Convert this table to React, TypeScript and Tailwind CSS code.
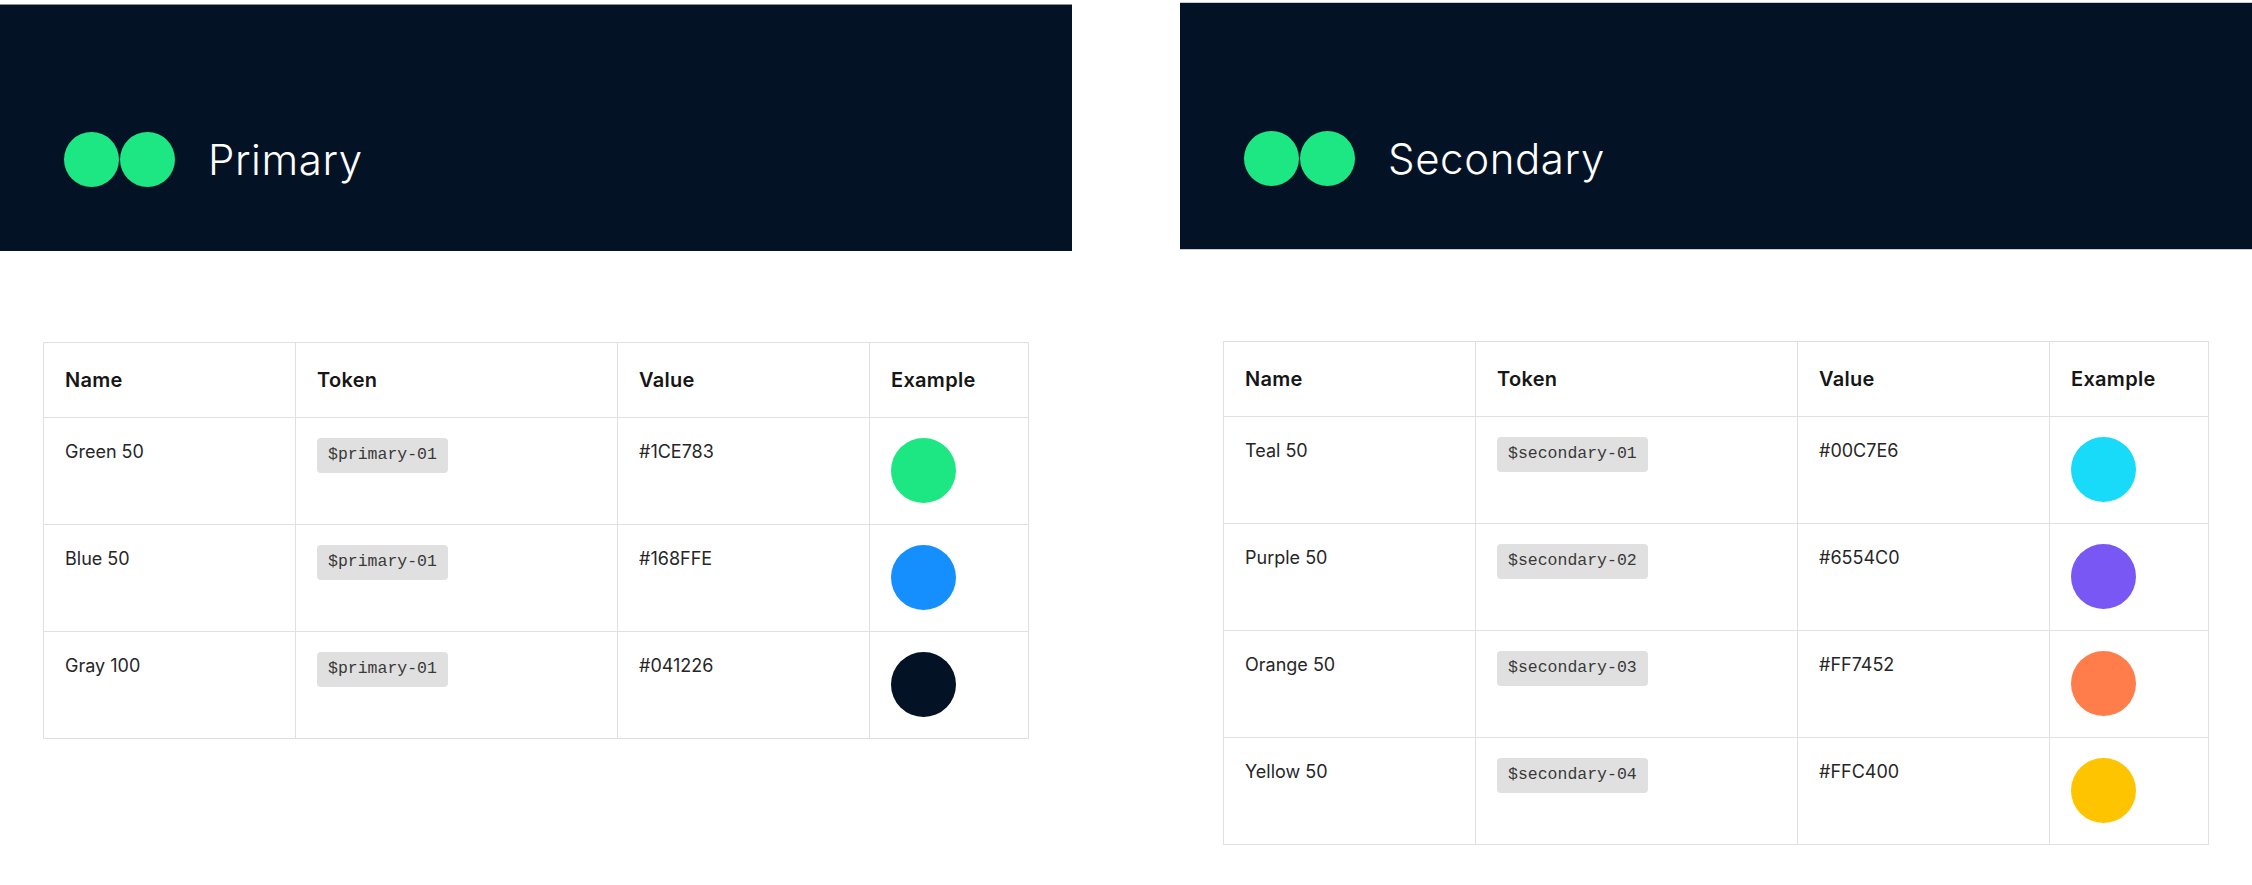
import React from "react";

type Row = { name: string; token: string; value: string; color: string };

const primary: Row[] = [
  { name: "Green 50", token: "$primary-01", value: "#1CE783", color: "#1CE783" },
  { name: "Blue 50", token: "$primary-01", value: "#168FFE", color: "#168FFE" },
  { name: "Gray 100", token: "$primary-01", value: "#041226", color: "#041226" },
];

const secondary: Row[] = [
  { name: "Teal 50", token: "$secondary-01", value: "#00C7E6", color: "#18DBFA" },
  { name: "Purple 50", token: "$secondary-02", value: "#6554C0", color: "#7857F5" },
  { name: "Orange 50", token: "$secondary-03", value: "#FF7452", color: "#FF7D4A" },
  { name: "Yellow 50", token: "$secondary-04", value: "#FFC400", color: "#FFC400" },
];

function Banner({ title, top }: { title: string; top: boolean }) {
  return (
    <div
      className={
        top
          ? "mt-[4px] border-t border-[#8a8d93] bg-[#041226] h-[247px] flex items-end pl-[64px] pb-[64px]"
          : "mt-[2px] border-t border-b border-[#c9ccd2] bg-[#041226] h-[248px] flex items-end pl-[64px] pb-[63px]"
      }
    >
      <div className="flex items-center">
        <div className="w-[55px] h-[55px] rounded-full bg-[#1CE783]" />
        <div className="w-[55px] h-[55px] rounded-full bg-[#1CE783] ml-[1px]" />
        <div
          className="ml-[33px] text-white text-[42px] font-light leading-none tracking-[0.6px]"
          style={{ fontFamily: "Inter, 'Noto Sans', sans-serif" }}
        >
          {title}
        </div>
      </div>
    </div>
  );
}

function Table({ rows }: { rows: Row[] }) {
  const cell = "border-r border-b border-[#e0e0e0] pl-[21px]";
  return (
    <div
      className="ml-[43px] mt-[91px] w-[986px] grid grid-cols-[252px_322px_252px_159px] border-l border-t border-[#e0e0e0]"
      style={{ fontFamily: "Inter, 'Noto Sans', sans-serif" }}
    >
      {["Name", "Token", "Value", "Example"].map((h) => (
        <div key={h} className={`${cell} h-[75px] flex items-center text-[20px] font-semibold tracking-[0.3px] text-[#161616]`}>
          {h}
        </div>
      ))}
      {rows.map((r) => (
        <React.Fragment key={r.name}>
          <div className={`${cell} h-[107px] pt-[20px] text-[18px] leading-[28px] text-[#262626]`}>{r.name}</div>
          <div className={`${cell} h-[107px] pt-[20px]`}>
            <span
              className="inline-flex items-center h-[35px] px-[11px] rounded-[4px] bg-[#e0e0e0] text-[16.5px] text-[#393939]"
              style={{ fontFamily: "'Liberation Mono', 'DejaVu Sans Mono', monospace" }}
            >
              {r.token}
            </span>
          </div>
          <div className={`${cell} h-[107px] pt-[20px] text-[18px] leading-[28px] text-[#262626]`}>{r.value}</div>
          <div className={`${cell} h-[107px] pt-[20px] pl-[18px]`}>
            <div className="w-[65px] h-[65px] rounded-full" style={{ backgroundColor: r.color }} />
          </div>
        </React.Fragment>
      ))}
    </div>
  );
}

export default function App() {
  return (
    <div className="w-[2252px] h-[885px] bg-white flex gap-[108px] overflow-hidden">
      <div className="w-[1072px] flex flex-col">
        <Banner title="Primary" top={true} />
        <Table rows={primary} />
      </div>
      <div className="w-[1072px] flex flex-col">
        <Banner title="Secondary" top={false} />
        <Table rows={secondary} />
      </div>
    </div>
  );
}
